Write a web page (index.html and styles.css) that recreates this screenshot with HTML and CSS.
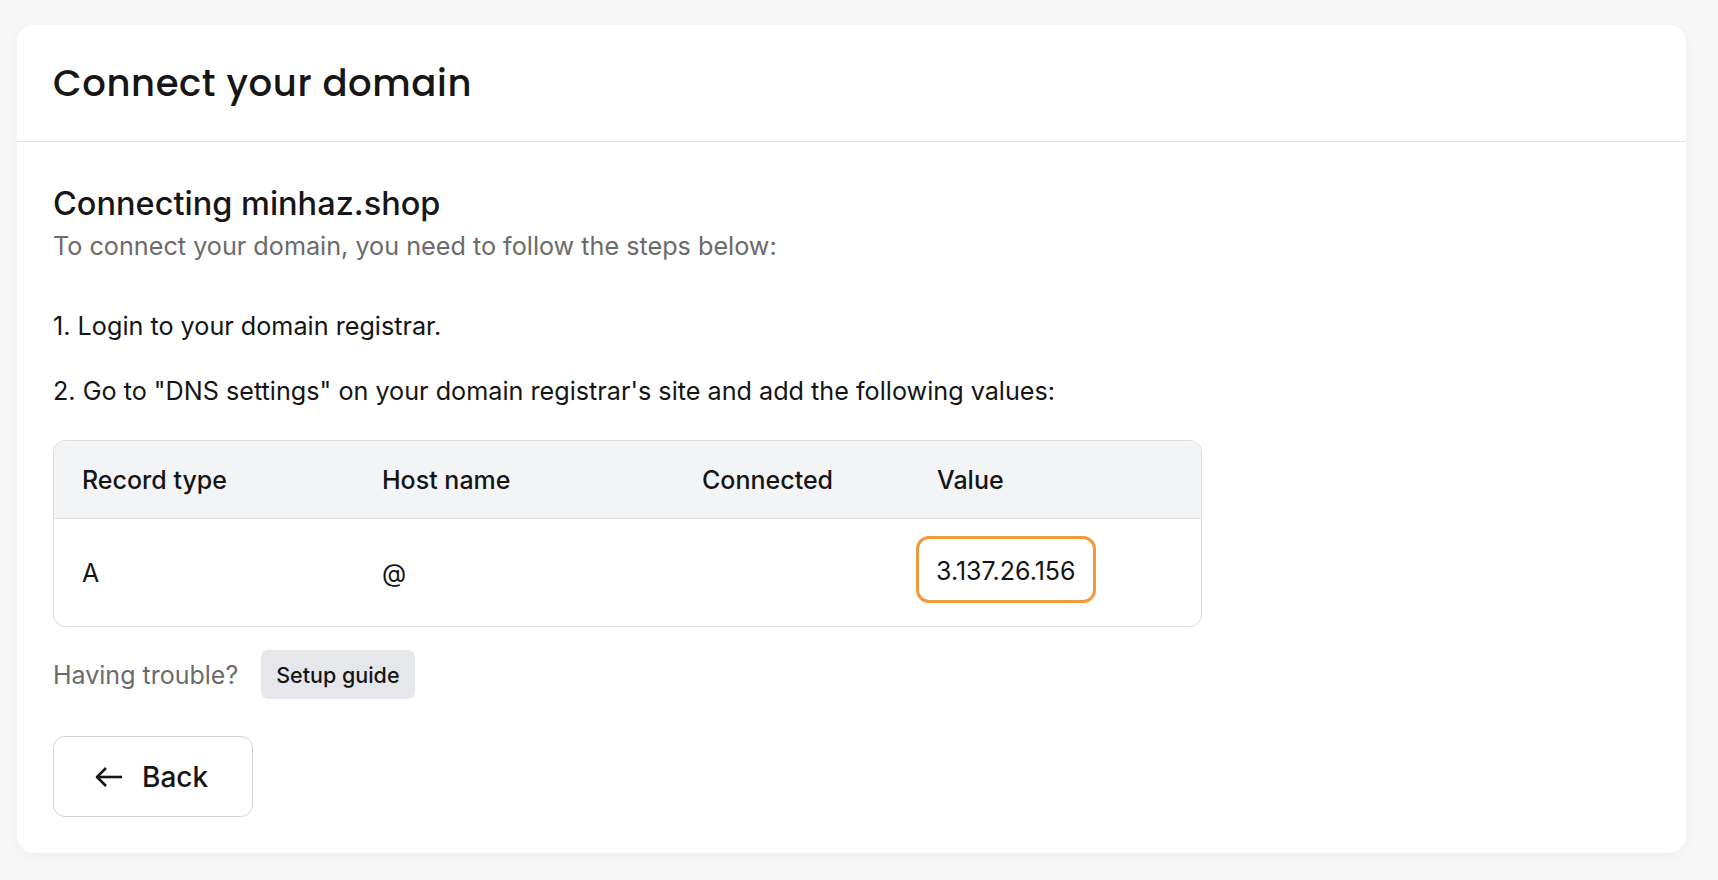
FILE: index.html
```html
<!DOCTYPE html>
<html>
<head>
	<title>Connect your domain</title>
	<meta charset="utf-8">
	<link rel="stylesheet" href="styles.css">
</head>
<body>
  <div class="card">
    <div class="card-header">
      <h1>Connect your domain</h1>
    </div>
    <div class="card-body">
      <h2>Connecting minhaz.shop</h2>
      <p class="lead">To connect your domain, you need to follow the steps below:</p>

      <p class="step step-first">1. Login to your domain registrar.</p>
      <p class="step">2. Go to "DNS settings" on your domain registrar's site and add the following values:</p>

      <div class="records">
        <div class="records-row records-head">
          <div class="cell">Record type</div>
          <div class="cell">Host name</div>
          <div class="cell">Connected</div>
          <div class="cell">Value</div>
        </div>
        <div class="records-row">
          <div class="cell">A</div>
          <div class="cell">@</div>
          <div class="cell"></div>
          <div class="cell"><span class="value-box">3.137.26.156</span></div>
        </div>
      </div>

      <div class="help">
        <span class="help-text">Having trouble?</span>
        <button class="btn-guide">Setup guide</button>
      </div>

      <button class="btn-back">
        <svg width="28" height="22" viewBox="0 0 28 22" fill="none" stroke="currentColor" stroke-width="2.6" stroke-linejoin="round">
          <path d="M28 11H3"/>
          <path d="M12 2l-9 9 9 9"/>
        </svg>
        <span>Back</span>
      </button>
    </div>
  </div>
</body>
</html>
```

FILE: styles.css
```css
html, body{
	margin: 0;
	padding: 0;
}
body{
	background: #f7f7f8;
	font-family: Inter, "Noto Sans", sans-serif;
	color: #151515;
}
.card{
	margin: 25px 32px 27px 17px;
	background: #fff;
	border-radius: 17px;
	box-shadow: 0 4px 14px rgba(0, 0, 0, 0.035);
}
.card-header{
	display: flex;
	align-items: center;
	height: 116px;
	padding: 0 36px;
	border-bottom: 1px solid #e4e4e7;
}
.card-header h1{
	margin: 0;
	font-family: Poppins, "Noto Sans", sans-serif;
	font-size: 37px;
	font-weight: 500;
	letter-spacing: 0.6px;
	color: #161616;
}
.card-body{
	padding: 44px 36px 36px;
}
.card-body h2{
	margin: 0;
	font-size: 32.5px;
	line-height: 36px;
	font-weight: 500;
	color: #161616;
}
.lead{
	margin: 8px 0 0;
	font-size: 25.2px;
	line-height: 32px;
	color: #6b6b6b;
}
.step{
	margin: 33px 0 0;
	font-size: 25.2px;
	line-height: 32px;
}
.step-first{
	margin-top: 48px;
}
.records{
	width: 1147px;
	margin-top: 33px;
	border: 1px solid #dcdde1;
	border-radius: 12px;
	overflow: hidden;
}
.records-row{
	display: grid;
	grid-template-columns: 300px 320px 235px 1fr;
	align-items: center;
	height: 107px;
	font-size: 25px;
}
.records-head{
	height: 77px;
	background: #f3f4f6;
	border-bottom: 1px solid #dcdde1;
	font-weight: 500;
}
.cell{
	padding: 0 28px;
}
.value-box{
	display: inline-block;
	margin: 0 0 6px -21px;
	padding: 4px 17px 0;
	line-height: 57px;
	border: 3px solid #f0993a;
	border-radius: 13px;
}
.help{
	display: flex;
	align-items: center;
	gap: 23px;
	margin-top: 23px;
}
.help-text{
	font-size: 25px;
	color: #6b6b6b;
}
.btn-guide{
	height: 49px;
	padding: 0 15px;
	border: none;
	border-radius: 7px;
	background: #e5e7eb;
	font-family: inherit;
	font-size: 21.5px;
	font-weight: 500;
	color: #151515;
}
.btn-back{
	display: flex;
	align-items: center;
	gap: 20px;
	width: 200px;
	height: 81px;
	margin-top: 37px;
	padding: 0 0 0 40px;
	border: 1px solid #d4d4d8;
	border-radius: 12px;
	background: #fff;
	font-family: inherit;
	font-size: 28px;
	font-weight: 500;
	color: #151515;
}
```
